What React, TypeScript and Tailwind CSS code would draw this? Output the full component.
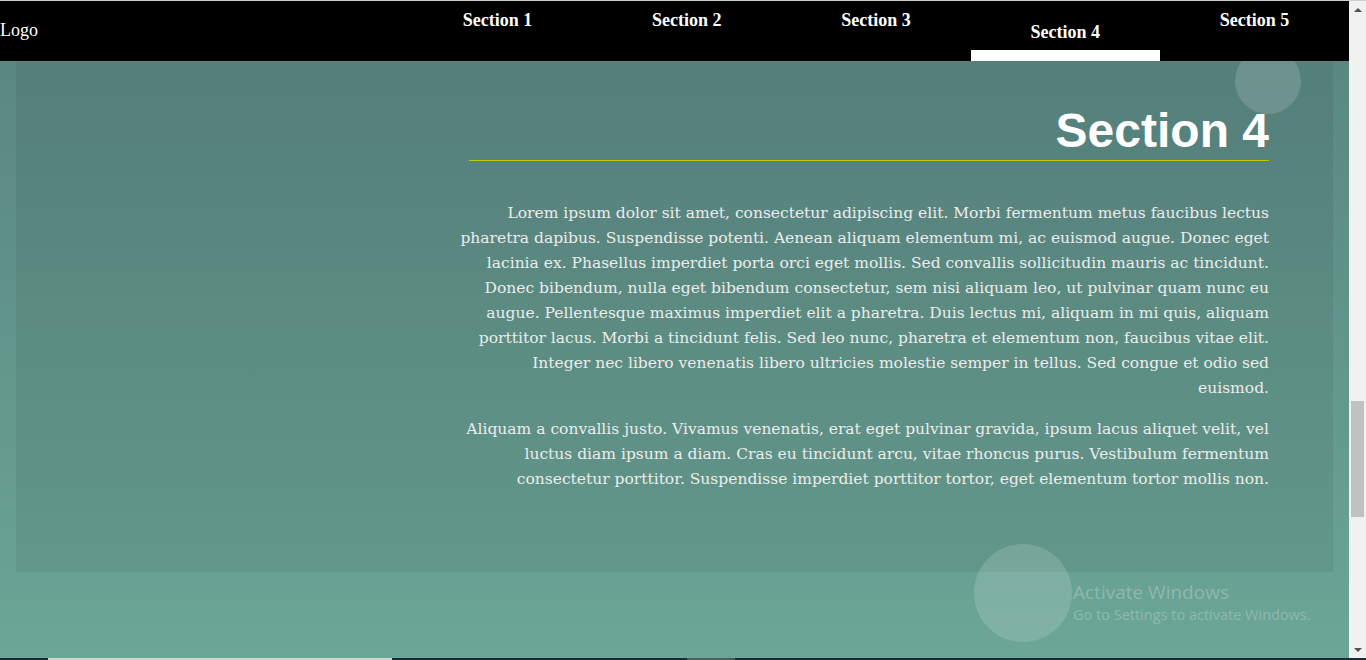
import React from "react";

const sections = ["Section 1", "Section 2", "Section 3", "Section 4", "Section 5"];

// line breaks kept as in the design
const paragraphs = [
  [
    "Lorem ipsum dolor sit amet, consectetur adipiscing elit. Morbi fermentum metus faucibus lectus",
    "pharetra dapibus. Suspendisse potenti. Aenean aliquam elementum mi, ac euismod augue. Donec eget",
    "lacinia ex. Phasellus imperdiet porta orci eget mollis. Sed convallis sollicitudin mauris ac tincidunt.",
    "Donec bibendum, nulla eget bibendum consectetur, sem nisi aliquam leo, ut pulvinar quam nunc eu",
    "augue. Pellentesque maximus imperdiet elit a pharetra. Duis lectus mi, aliquam in mi quis, aliquam",
    "porttitor lacus. Morbi a tincidunt felis. Sed leo nunc, pharetra et elementum non, faucibus vitae elit.",
    "Integer nec libero venenatis libero ultricies molestie semper in tellus. Sed congue et odio sed",
    "euismod.",
  ],
  [
    "Aliquam a convallis justo. Vivamus venenatis, erat eget pulvinar gravida, ipsum lacus aliquet velit, vel",
    "luctus diam ipsum a diam. Cras eu tincidunt arcu, vitae rhoncus purus. Vestibulum fermentum",
    "consectetur porttitor. Suspendisse imperdiet porttitor tortor, eget elementum tortor mollis non.",
  ],
];

const NavBar = ({ active }: { active: number }) => (
  <nav className="flex h-[60px] bg-black text-white font-['Liberation_Serif',serif]">
    <div className="w-[403px] flex items-center text-[18px] leading-none pb-[2px]">Logo</div>
    <ul className="flex flex-1">
      {sections.map((s, i) => (
        <li key={s} className="flex-1 flex flex-col items-center">
          {i === active ? (
            <>
              <span className="mt-[21px] text-[18px] font-bold leading-[20px]">{s}</span>
              <span className="mt-auto h-[11px] w-full bg-white" />
            </>
          ) : (
            <span className="mt-[9px] text-[18px] font-bold leading-[20px]">{s}</span>
          )}
        </li>
      ))}
    </ul>
  </nav>
);

const Scrollbar = () => (
  <div className="w-[17px] bg-[#f1f1f1] flex flex-col items-center">
    <div className="h-[17px] flex items-center justify-center">
      <span className="w-0 h-0 border-l-[4px] border-r-[4px] border-b-[4px] border-l-transparent border-r-transparent border-b-[#505050]" />
    </div>
    <div className="h-[383px]" />
    <div className="h-[116px] w-[13px] bg-[#c1c1c1]" />
    <div className="flex-1" />
    <div className="h-[17px] flex items-center justify-center">
      <span className="w-0 h-0 border-l-[4px] border-r-[4px] border-t-[4px] border-l-transparent border-r-transparent border-t-[#505050]" />
    </div>
  </div>
);

export default function App() {
  return (
    <div className="h-[660px] w-[1366px] flex flex-col overflow-hidden">
      <div className="h-px bg-[#cfcfcf]" />
      <div className="flex flex-1 min-h-0">
        <div className="flex-1 flex flex-col">
          <NavBar active={3} />
          <main className="relative flex-1 px-4 bg-gradient-to-b from-[#5a8782] to-[#6ba696] overflow-hidden">
            <span className="absolute left-[1235px] top-[-13px] w-[66px] h-[66px] rounded-full bg-white/15" />
            <span className="absolute left-[974px] top-[483px] w-[98px] h-[98px] rounded-full bg-white/15" />
            <section className="h-[511px] bg-black/[0.06] pt-[41px] flex flex-col items-end pr-16">
              <h1 className="w-[800px] text-right font-['Liberation_Sans',sans-serif] font-bold text-[48px] leading-[58px] text-white border-b border-[#c9c400]">
                Section 4
              </h1>
              <div className="mt-10 text-right font-['DejaVu_Serif',serif] text-[15.5px] leading-[25px] text-[#ececec] whitespace-nowrap">
                {paragraphs.map((lines, i) => (
                  <p key={i} className={i > 0 ? "mt-4" : ""}>
                    {lines.map((l, j) => (
                      <React.Fragment key={j}>
                        {l}
                        {j < lines.length - 1 && <br />}
                      </React.Fragment>
                    ))}
                  </p>
                ))}
              </div>
            </section>
            <div className="absolute left-[1073px] top-[518px] font-['Open_Sans',sans-serif] text-white/25">
              <p className="text-[19px] leading-[26px]">Activate Windows</p>
              <p className="text-[14.5px] leading-[20px]">Go to Settings to activate Windows.</p>
            </div>
          </main>
        </div>
        <Scrollbar />
      </div>
      <div className="h-[2px] flex bg-[#1b2a33]">
        <div className="w-[48px]" />
        <div className="w-[344px] bg-[#d3d3d3]" />
        <div className="w-[295px]" />
        <div className="w-[48px] bg-[#4b5a60]" />
      </div>
    </div>
  );
}
